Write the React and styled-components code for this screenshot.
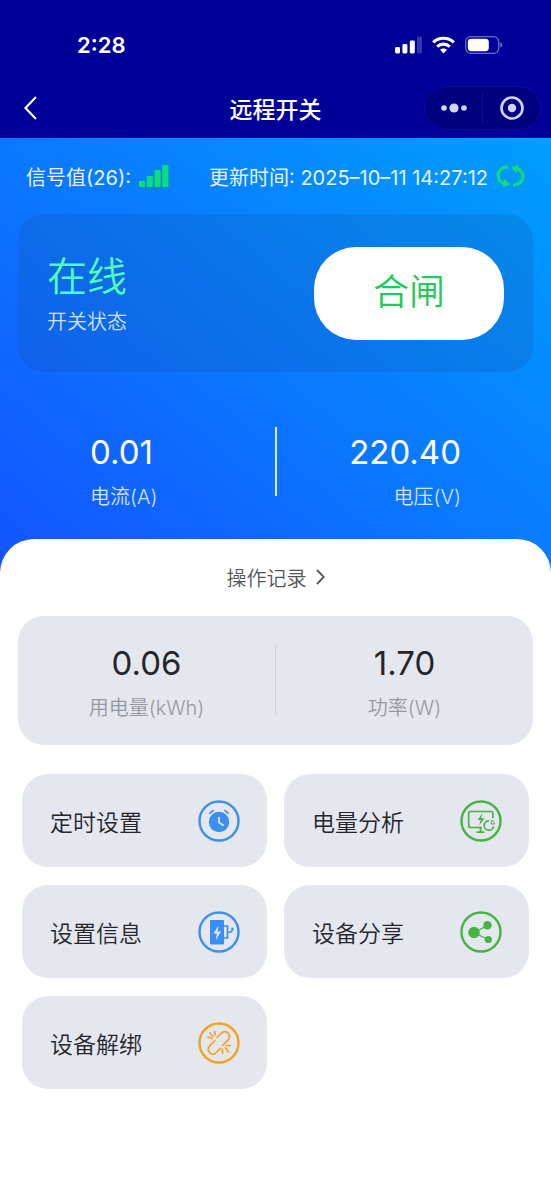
import React from 'react'
import styled, { createGlobalStyle } from 'styled-components'

const GlobalStyle = createGlobalStyle`
* {
  box-sizing: border-box;
}
body {
  margin: 0;
  background: #fff;
  font-family: Inter, 'Noto Sans CJK SC', sans-serif;
  font-weight: 350;
}
button {
  padding: 0;
  border: 0;
  background: none;
  color: inherit;
  font: inherit;
  cursor: pointer;
}
svg {
  display: block;
}
`

const Header = styled.header`
  background: #000099;
  color: #fff;
`

const StatusBar = styled.div`
  display: flex;
  align-items: center;
  justify-content: space-between;
  height: 78px;
  padding: 12px 48px 0 77px;
`

const Clock = styled.time`
  font-size: 22px;
  font-weight: 600;
`

const StatusIcons = styled.div`
  display: flex;
  align-items: center;
  gap: 10px;
`

const NavBar = styled.nav`
  display: grid;
  grid-template-columns: 1fr auto 1fr;
  align-items: center;
  height: 60px;
  padding: 0 10px;
`

const BackButton = styled.button`
  display: flex;
  align-items: center;
  justify-content: center;
  width: 40px;
  height: 40px;
`

const Title = styled.h1`
  margin: 0;
  font-size: 23px;
  font-weight: 500;
`

const Capsule = styled.div`
  display: flex;
  justify-self: end;
  width: 117px;
  height: 44px;
  padding: 6px 0;
  border: 1px solid #0c0c96;
  border-radius: 22px;
  background: #000080;
`

const CapsuleButton = styled.button`
  display: flex;
  flex: 1;
  align-items: center;
  justify-content: center;

  & + & {
    border-left: 1px solid #10108e;
  }
`

const Hero = styled.section`
  padding: 20px 18px 78px;
  background: linear-gradient(40deg, #1552ff 0%, #0a78ff 50%, #009fff 100%);
  color: #fff;
`

const MetaRow = styled.div`
  display: flex;
  align-items: center;
  justify-content: space-between;
  height: 36px;
  margin-bottom: 20px;
  padding: 0 8px;
  color: #e6f4ff;
  font-size: 20px;
  font-weight: 400;
  white-space: nowrap;
`

const Meta = styled.div`
  display: flex;
  align-items: center;
  gap: 8px;
`

const RefreshButton = styled.button`
  display: flex;
`

const SwitchCard = styled.div`
  display: flex;
  align-items: center;
  justify-content: space-between;
  height: 158px;
  padding: 0 29px;
  border-radius: 26px;
  background: rgba(20, 80, 150, 0.2);
`

const State = styled.div`
  padding-top: 5px;
`

const StateValue = styled.div`
  color: #52f9b8;
  font-size: 40px;
  line-height: 52px;
`

const StateLabel = styled.div`
  color: #cfe2fb;
  font-size: 20px;
  line-height: 38px;
`

const SwitchButton = styled.button`
  width: 190px;
  height: 93px;
  padding-bottom: 8px;
  border-radius: 42px;
  background: #fff;
  color: #1fcb5c;
  font-size: 36px;
`

const Readings = styled.dl`
  display: flex;
  justify-content: space-between;
  margin: 0;
  padding: 55px 72px 0;
`

const Reading = styled.div`
  display: flex;
  flex: 1;
  flex-direction: column-reverse;
  justify-content: flex-end;
  align-items: ${({ $align }) => $align};
`

const Value = styled.dd`
  margin: 0;
  font-size: 33px;
  font-weight: 400;
  line-height: 50px;
`

const Label = styled.dt`
  color: ${({ $color }) => $color};
  font-size: 20px;
  line-height: 40px;
`

const Divider = styled.div`
  width: 2px;
  height: 69px;
  background: ${({ $color }) => $color};
`

const Sheet = styled.main`
  margin-top: -56px;
  padding: 18px 18px 40px;
  border-radius: 34px 34px 0 0;
  background: #fff;
`

const RecordLink = styled.a`
  display: flex;
  align-items: center;
  justify-content: center;
  gap: 9px;
  height: 40px;
  margin-bottom: 19px;
  color: #55565a;
  font-size: 20px;
  text-decoration: none;
`

const StatsCard = styled.dl`
  display: flex;
  margin: 0 0 29px;
  padding: 22px 0 17px;
  border-radius: 26px;
  background: #e4e7ee;
  color: #25262b;

  ${Divider} {
    width: 1px;
    margin-top: 7px;
  }
`

const TileGrid = styled.div`
  display: grid;
  grid-template-columns: 1fr 1fr;
  gap: 18px 17px;
  padding: 0 4px;
`

const Tile = styled.button`
  display: flex;
  align-items: center;
  justify-content: space-between;
  height: 93px;
  padding: 0 27px 0 28px;
  border-radius: 26px;
  background: #e4e7ee;
  color: #25262b;
  font-size: 23px;
`

const CellularIcon = () => (
  <svg width="27" height="18" viewBox="0 0 27 18" fill="#fff" aria-hidden="true">
    <rect x="0" y="11" width="5" height="6.5" rx="1.4" />
    <rect x="7.4" y="8" width="5" height="9.5" rx="1.4" />
    <rect x="14.8" y="4.5" width="5" height="13" rx="1.4" />
    <rect x="22" y="0.5" width="5" height="17" rx="1.4" opacity="0.2" />
  </svg>
)

const WifiIcon = () => (
  <svg width="23" height="18" viewBox="0 0 23 18" fill="none" stroke="#fff" strokeWidth="3.2" aria-hidden="true">
    <path d="M1.2 6.3C7 .9 16 .9 21.8 6.3" />
    <path d="M5.2 10.6c3.6-3.3 9-3.3 12.6 0" />
    <path d="M8 13.8c2-1.9 5-1.9 7 0L11.5 17.4z" fill="#fff" stroke="none" />
  </svg>
)

const BatteryIcon = () => (
  <svg width="38" height="18" viewBox="0 0 38 18" aria-hidden="true">
    <rect x="0.7" y="0.7" width="33" height="16.6" rx="5" fill="none" stroke="#fff" strokeOpacity="0.42" strokeWidth="1.3" />
    <rect x="2.8" y="2.8" width="21" height="12.4" rx="3.4" fill="#fff" />
    <path d="M35.4 6.3c2.2.7 2.2 4.7 0 5.4z" fill="#fff" opacity="0.5" />
  </svg>
)

const BackIcon = () => (
  <svg width="13" height="24" viewBox="0 0 13 24" fill="none" stroke="#fff" strokeWidth="2.2" aria-hidden="true">
    <path d="M12 1L1.5 12 12 23" />
  </svg>
)

const MoreIcon = () => (
  <svg width="26" height="10" viewBox="0 0 26 10" fill="#d4d4ee" aria-hidden="true">
    <circle cx="3" cy="5" r="2.8" />
    <circle cx="13" cy="5" r="4.6" />
    <circle cx="23" cy="5" r="2.8" />
  </svg>
)

const TargetIcon = () => (
  <svg width="24" height="24" viewBox="0 0 24 24" aria-hidden="true">
    <circle cx="12" cy="12" r="10.5" fill="none" stroke="#d4d4ee" strokeWidth="2.6" />
    <circle cx="12" cy="12" r="4.2" fill="#d4d4ee" />
  </svg>
)

const SignalIcon = () => (
  <svg width="30" height="22" viewBox="0 0 30 22" fill="#0ae076" aria-hidden="true">
    <rect x="0" y="16" width="6" height="6" />
    <rect x="7.8" y="11" width="6" height="11" />
    <rect x="15.6" y="5" width="6" height="17" />
    <rect x="23.3" y="0" width="6" height="22" />
  </svg>
)

const RefreshIcon = () => (
  <svg width="29" height="24" viewBox="0 0 29 24" aria-hidden="true">
    <g fill="none" stroke="#14dc74" strokeWidth="3">
      <path d="M12 3C6 3 2 7 2 11.5c0 4 3 7 7 8.5" />
      <path d="M17 21C23 21 27 17 27 12.5c0-4-3-7-7-8.5" />
    </g>
    <path d="M8.5 15l5.5 5.5-7.5 3z" fill="#14dc74" />
    <path d="M20.5 9L15 3.500l7.5-3z" fill="#14dc74" />
  </svg>
)

const ChevronIcon = () => (
  <svg width="9" height="16" viewBox="0 0 9 16" fill="none" stroke="#55565a" strokeWidth="1.8" aria-hidden="true">
    <path d="M1 1l6.8 7L1 15" />
  </svg>
)

const RoundIcon = ({ color, children }) => (
  <svg width="42" height="42" viewBox="0 0 42 42" fill="none" stroke={color} strokeWidth="1.7" aria-hidden="true">
    <circle cx="21" cy="21" r="19.5" strokeWidth="2.4" />
    {children}
  </svg>
)

const TimerIcon = () => (
  <RoundIcon color="#3b8ff3">
    <circle cx="21" cy="22" r="10.2" fill="#3b8ff3" stroke="none" />
    <path d="M11.4 13.6l4.2-3.5M30.6 13.6l-4.2-3.5" />
    <path d="M21 17v5.6l4.6 2.8" stroke="#e4e7ee" strokeWidth="1.8" />
  </RoundIcon>
)

const AnalysisIcon = () => (
  <RoundIcon color="#45b441">
    <path d="M22 27.5H10.5a1.8 1.8 0 0 1-1.8-1.8V13.3a1.8 1.8 0 0 1 1.8-1.8h20.5a1.8 1.8 0 0 1 1.8 1.8V18" />
    <path d="M20.5 27.5v4.5M16.5 32.2h8" />
    <path d="M22.6 13l-5 7h3.2l-1.6 5.5 5.3-7.3h-3.3z" fill="#45b441" stroke="none" />
    <path d="M29 20.8a4.7 4.7 0 1 0 4.5 5.5" />
    <path d="M31.3 20.3v3.7h3.2c0-2-1.3-3.4-3.2-3.7z" strokeWidth="1" />
  </RoundIcon>
)

const ChargerIcon = () => (
  <RoundIcon color="#3b8ff3">
    <rect x="12" y="9" width="14" height="24.5" rx="1" fill="#3b8ff3" stroke="none" />
    <path d="M20.5 14.5l-5 8h3.3l-1 6.5 5.2-8.5h-3.4z" fill="#e4e7ee" stroke="none" />
    <path d="M26 15h3.5v12H26" />
    <path d="M30 21.5l3-.5 2-3" />
    <circle cx="34.5" cy="17.8" r="1.2" fill="#3b8ff3" stroke="none" />
  </RoundIcon>
)

const ShareIcon = () => (
  <RoundIcon color="#45b441">
    <path d="M27.5 14.5L14 21.5l14 7" strokeWidth="1.3" />
    <g fill="#45b441" stroke="none">
      <circle cx="14" cy="21.5" r="5.7" />
      <circle cx="27.5" cy="14.3" r="4.2" />
      <circle cx="28.3" cy="28.5" r="3.6" />
    </g>
  </RoundIcon>
)

const UnbindIcon = () => (
  <RoundIcon color="#f5a023">
    <path d="M19 15.5l4-4c2.2-2.2 4.8-2.2 6.8-.6 2.2 2 2.2 4.8.3 7l-5.6 5.6" strokeLinecap="round" />
    <path d="M17 18.5l-5.3 5.3c-2 2-2 4.900 0 6.800 2 1.900 4.700 1.800 6.600-.1l4-4.200" strokeLinecap="round" />
    <path d="M10 15l4 1.5M12 11l3 3.5M16.5 9.5l.6 3.5M24.5 27v4.5M27.5 26l3 4M28 23.5h4.5" strokeLinecap="round" />
  </RoundIcon>
)

const tiles = [
  { name: '定时设置', Icon: TimerIcon },
  { name: '电量分析', Icon: AnalysisIcon },
  { name: '设置信息', Icon: ChargerIcon },
  { name: '设备分享', Icon: ShareIcon },
  { name: '设备解绑', Icon: UnbindIcon },
]

const App = () => {
  return (
    <>
      <GlobalStyle />
      <Header>
        <StatusBar>
          <Clock>2:28</Clock>
          <StatusIcons>
            <CellularIcon />
            <WifiIcon />
            <BatteryIcon />
          </StatusIcons>
        </StatusBar>
        <NavBar>
          <BackButton aria-label="返回"><BackIcon /></BackButton>
          <Title>远程开关</Title>
          <Capsule>
            <CapsuleButton aria-label="更多"><MoreIcon /></CapsuleButton>
            <CapsuleButton aria-label="关闭"><TargetIcon /></CapsuleButton>
          </Capsule>
        </NavBar>
      </Header>

      <Hero>
        <MetaRow>
          <Meta>信号值(26): <SignalIcon /></Meta>
          <Meta>
            更新时间: 2025–10–11 14:27:12
            <RefreshButton aria-label="刷新"><RefreshIcon /></RefreshButton>
          </Meta>
        </MetaRow>
        <SwitchCard>
          <State>
            <StateValue>在线</StateValue>
            <StateLabel>开关状态</StateLabel>
          </State>
          <SwitchButton>合闸</SwitchButton>
        </SwitchCard>
        <Readings>
          <Reading $align="flex-start">
            <Label $color="#d3e4ff">电流(A)</Label>
            <Value>0.01</Value>
          </Reading>
          <Divider $color="#d8e8ff" />
          <Reading $align="flex-end">
            <Label $color="#d3e4ff">电压(V)</Label>
            <Value>220.40</Value>
          </Reading>
        </Readings>
      </Hero>

      <Sheet>
        <RecordLink href="#records">操作记录 <ChevronIcon /></RecordLink>
        <StatsCard>
          <Reading $align="center">
            <Label $color="#96989f">用电量(kWh)</Label>
            <Value>0.06</Value>
          </Reading>
          <Divider $color="#cdd0d6" />
          <Reading $align="center">
            <Label $color="#96989f">功率(W)</Label>
            <Value>1.70</Value>
          </Reading>
        </StatsCard>
        <TileGrid>
          {tiles.map(({ name, Icon }) => (
            <Tile key={name}>
              {name}
              <Icon />
            </Tile>
          ))}
        </TileGrid>
      </Sheet>
    </>
  )
}

export default App
